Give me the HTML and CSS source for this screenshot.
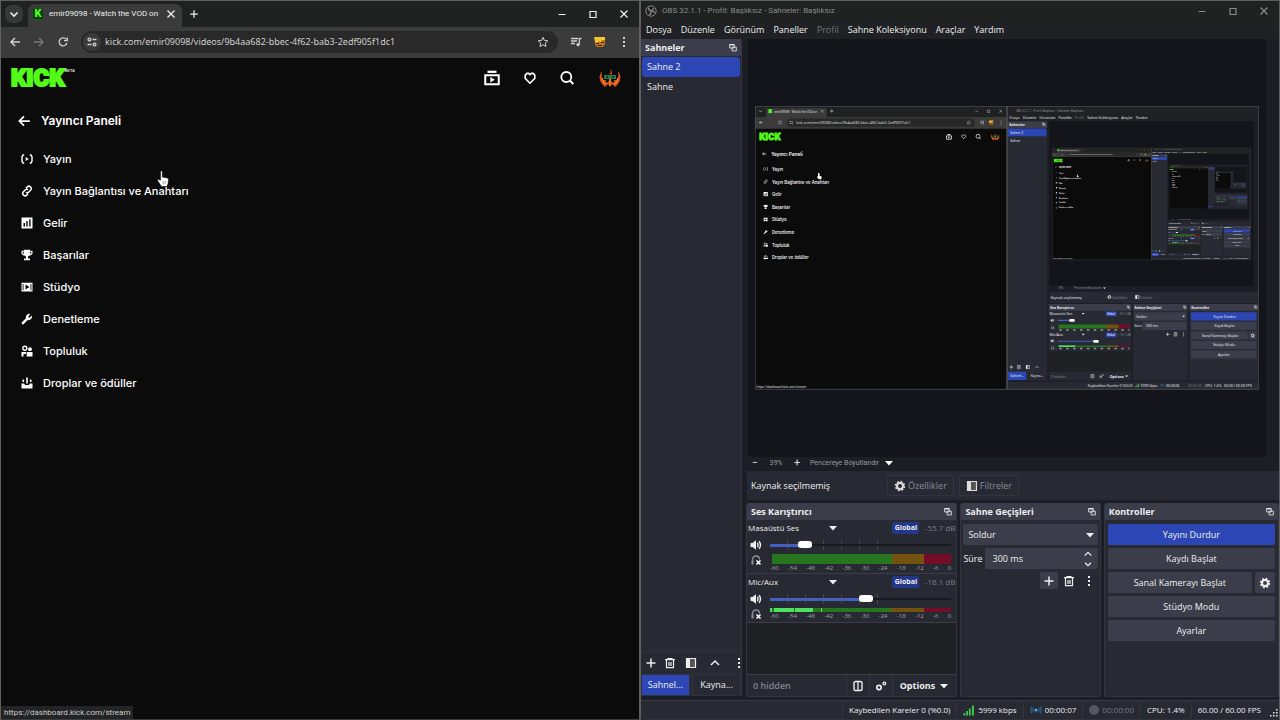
FILE: index.html
```html
<!DOCTYPE html>
<html lang="tr">
<head>
<meta charset="utf-8">
<meta name="viewport" content="width=device-width, initial-scale=1">
<title>Yayıncı Paneli</title>
<link rel="stylesheet" href="styles.css">
</head>
<body>
<svg class="sprite" aria-hidden="true">
  <symbol id="i-down" viewBox="0 0 12 12"><path d="M2.5 4.5 6 8l3.500-3.500" fill="none" stroke="currentColor" stroke-width="1.600"/></symbol>
  <symbol id="i-up" viewBox="0 0 12 12"><path d="M2 8l4-4 4 4" fill="none" stroke="currentColor" stroke-width="1.500"/></symbol>
  <symbol id="i-x" viewBox="0 0 12 12"><path d="M2.500 2.500l7 7m0-7l-7 7" fill="none" stroke="currentColor" stroke-width="1.300"/></symbol>
  <symbol id="i-min" viewBox="0 0 12 12"><path d="M2.500 6.500h7" stroke="currentColor"/></symbol>
  <symbol id="i-max" viewBox="0 0 12 12"><path d="M3 3.500h6v6H3z" fill="none" stroke="currentColor" stroke-width="1.200"/></symbol>
  <symbol id="i-plus" viewBox="0 0 12 12"><path d="M6 1.500v9M1.500 6h9" stroke="currentColor" stroke-width="1.500"/></symbol>
  <symbol id="i-back" viewBox="0 0 12 12"><path d="M11 6H2m4-4L2 6l4 4" fill="none" stroke="currentColor" stroke-width="1.500"/></symbol>
  <symbol id="i-fwd" viewBox="0 0 12 12"><path d="M1 6h9M6 2l4 4-4 4" fill="none" stroke="currentColor" stroke-width="1.400"/></symbol>
  <symbol id="i-reload" viewBox="0 0 12 12"><path d="M9.300 3.300A4 4 0 1 0 10 7M10.300 1.500v3.200H7" fill="none" stroke="currentColor" stroke-width="1.300"/></symbol>
  <symbol id="i-tune" viewBox="0 0 12 12"><g fill="none" stroke="currentColor" stroke-width="1.300"><circle cx="3.500" cy="3.500" r="1.400"/><path d="M6.500 3.500h4M1.500 8.500h4"/><circle cx="8.500" cy="8.500" r="1.400"/></g></symbol>
  <symbol id="i-star" viewBox="0 0 12 12"><path d="M6 1.300l1.400 3.100 3.400.4-2.500 2.300.7 3.400-3-1.700-3 1.700.7-3.400L1.200 4.800l3.400-.4z" fill="none" stroke="currentColor"/></symbol>
  <symbol id="i-music" viewBox="0 0 12 12"><path d="M1 2.500h7M1 5h6M1 7.500h4M9.300 2v6.500M9 2.500h2.500" fill="none" stroke="currentColor" stroke-width="1.300"/><circle cx="8" cy="8.700" r="1.600" fill="currentColor"/></symbol>
  <symbol id="i-dots" viewBox="0 0 12 12"><path d="M5 1h2v2H5zM5 5h2v2H5zM5 9h2v2H5z" fill="currentColor"/></symbol>
  <symbol id="i-vod" viewBox="0 0 16 16"><path d="M4 1.500h8v2H4z" fill="currentColor"/><path d="M2 5.500h12v8H2z" fill="none" stroke="currentColor" stroke-width="1.800"/><path d="M6.500 7v5l4-2.500z" fill="currentColor"/></symbol>
  <symbol id="i-heart" viewBox="0 0 16 16"><path d="M8 13.200L3.200 8.300V5.200L5 3.400h1.700L8 4.700l1.300-1.300H11l1.800 1.800v3.100z" fill="none" stroke="currentColor" stroke-width="1.600"/></symbol>
  <symbol id="i-search" viewBox="0 0 16 16"><circle cx="7.300" cy="7" r="5" fill="none" stroke="currentColor" stroke-width="1.800"/><path d="M11 10.700l3.300 3.300" stroke="currentColor" stroke-width="2"/></symbol>
  <symbol id="i-live" viewBox="0 0 12 12"><path d="M3.200 2H2L1 3.800v4.400L2 10h1.200M8.800 2H10l1 1.800v4.400L10 10H8.800" fill="none" stroke="currentColor" stroke-width="1.400"/><path d="M4.700 4v4l3-2z" fill="currentColor"/></symbol>
  <symbol id="i-link" viewBox="0 0 12 12"><path d="M5 3.200l1.400-1.400q1.600-1.300 3 0 1.700 1.600.4 3.200L7.600 7.200q-1.400 1.100-2.700 0M7 8.800l-1.400 1.400q-1.600 1.300-3 0-1.700-1.600-.4-3.200l2.200-2.200q1.400-1.100 2.700 0" fill="none" stroke="currentColor" stroke-width="1.500"/></symbol>
  <symbol id="i-chart" viewBox="0 0 12 12"><path d="M.5.500h11v11H.5zM2.500 6v3.500H4V6zM5.300 4v5.500h1.400V4zM8.200 2.300v7.200h1.400V2.300z" fill="currentColor" fill-rule="evenodd"/></symbol>
  <symbol id="i-cup" viewBox="0 0 12 12"><path d="M3 .7h6v1h2.500v3L9.500 6.500H8.400L7 7.700v1.800h2v1.800H3V9.500h2V7.700L3.600 6.500H2.500L.5 4.700v-3H3zM1.700 2.800v1.400l1.100.8V2.800zM9.200 2.800V5l1.100-.8V2.800z" fill="currentColor" fill-rule="evenodd"/></symbol>
  <symbol id="i-studio" viewBox="0 0 12 12"><path d="M.5 1.700h11v8.800H.5zM1.600 3v6.300h.9V3zM9.500 3v6.300h.9V3zM4.500 3.500v5l4-2.500z" fill="currentColor" fill-rule="evenodd"/></symbol>
  <symbol id="i-wrench" viewBox="0 0 12 12"><path d="M.7 9.500l4.200-4.200q-.5-2 1-3.500Q7.400.5 9.400 1L7.500 3v1.500H9L11 2.600q.5 2-.9 3.400-1.400 1.500-3.400 1L2.500 11.300q-1 .3-1.500-.3-.6-.7-.3-1.500z" fill="currentColor"/></symbol>
  <symbol id="i-people" viewBox="0 0 12 12"><circle cx="3.800" cy="3.200" r="2" fill="none" stroke="currentColor" stroke-width="1.400"/><circle cx="9" cy="4.200" r="1.900" fill="currentColor"/><path d="M.5 11.500V7h4.500v2H2.500v2.500zM5.700 7h5.800v4.500H5.700z" fill="currentColor"/></symbol>
  <symbol id="i-drops" viewBox="0 0 12 12"><path d="M5.200.5h1.600v6H5.200zM1.500 2.500h1.600V5H1.500zM8.900 2.500h1.600V5H8.900zM.5 6.500H3L4.300 8h3.400L9 6.500h2.500v5H.5z" fill="currentColor"/></symbol>
  <symbol id="i-pop" viewBox="0 0 12 12"><path d="M2 2h5.500v4H2zM5 5h5v4.500H5z" fill="#3b3e4a" stroke="currentColor"/><path d="M2 2h5.500" stroke="currentColor" stroke-width="1.500"/></symbol>
  <symbol id="i-trash" viewBox="0 0 12 12"><path d="M1 2.700h10M4 2.500v-1h4v1M2.500 3v7.700h7V3M5 5v4M7 5v4" fill="none" stroke="currentColor" stroke-width="1.200"/></symbol>
  <symbol id="i-filter" viewBox="0 0 12 12"><path d="M1.500 1.500h9v9h-9z" fill="#555" stroke="currentColor" stroke-width="1.200"/><path d="M1.500 1.500H5v9H1.500z" fill="currentColor"/></symbol>
  <symbol id="i-gear" viewBox="0 0 12 12"><circle cx="6" cy="6" r="3" fill="none" stroke="currentColor" stroke-width="2"/><circle cx="6" cy="6" r="4.400" fill="none" stroke="currentColor" stroke-width="1.600" stroke-dasharray="1.900 1.550"/></symbol>
  <symbol id="i-speaker" viewBox="0 0 12 12"><path d="M.5 4h2L6 1.300v9.400L2.500 8h-2z" fill="currentColor"/><path d="M7.300 3.800q1.500 2.200 0 4.400M9 2.200q3 3.800 0 7.600" fill="none" stroke="currentColor" stroke-width="1.400"/></symbol>
  <symbol id="i-phones" viewBox="0 0 12 12"><path d="M2.500 10V5.500q0-3.500 3.500-3.500t3.500 3.500" fill="none" stroke="#8b8d94" stroke-width="1.300"/><path d="M1.500 6.500h2v4h-2z" fill="#8b8d94"/><path d="M6.500 6.500l4 4m0-4l-4 4" stroke="#fff" stroke-width="1.600"/></symbol>
  <symbol id="i-cols" viewBox="0 0 12 12"><rect x="2" y="1.500" width="8" height="9" rx="1.500" fill="none" stroke="currentColor" stroke-width="1.400"/><path d="M6 1.500v9" stroke="currentColor" stroke-width="1.300"/></symbol>
  <symbol id="i-gears" viewBox="0 0 12 12"><circle cx="4" cy="7.500" r="2.200" fill="none" stroke="currentColor" stroke-width="1.700"/><circle cx="9.300" cy="3.500" r="1.400" fill="none" stroke="currentColor" stroke-width="1.300"/></symbol>
  <symbol id="i-tri" viewBox="0 0 12 12"><path d="M2 4h8L6 8.500z" fill="currentColor"/></symbol>
  <symbol id="i-obs" viewBox="0 0 12 12"><circle cx="6" cy="6" r="5.200" fill="none" stroke="currentColor" stroke-width=".9"/><path d="M3.500 2.500q-.3 3 2.500 3.300 2.500-1 2.800-2.800M6 5.800q.8 3-2 4M6 5.800q2.700-.2 4 2.200" fill="none" stroke="currentColor" stroke-width="1.200"/></symbol>
  <symbol id="i-bars" viewBox="0 0 12 12"><path d="M.5 9h1.800v2.500H.5zM3.200 7H5v4.500H3.200zM5.900 4.500h1.800v7H5.900zM8.900 1.500h2v10h-2z" fill="#3fc64b"/></symbol>
  <symbol id="i-air" viewBox="0 0 12 12"><circle cx="6" cy="6" r="1.600" fill="#4aa3e8"/><path d="M3.500 3.500q-1.500 2.500 0 5M8.500 3.500q1.500 2.500 0 5M1.700 2.500q-1.800 3.500 0 7M10.300 2.500q1.800 3.500 0 7" fill="none" stroke="#2c6ca8"/></symbol>
  <symbol id="i-grip" viewBox="0 0 12 12"><path d="M9 2h1.500v1.500H9zM9 5h1.500v1.500H9zM9 8h1.500v1.500H9zM6 5h1.500v1.500H6zM6 8h1.500v1.500H6zM3 8h1.500v1.500H3z" fill="currentColor"/></symbol>
  <symbol id="i-phoenix" viewBox="0 0 24 24"><path d="M4 5Q-1 11 4 18l3 3 3-3 2 3 2-3 3 3 3-3q5-7 0-13 1 6-1 9h-3v3l-3-2v-4h-2v4l-3 2v-3H5Q3 11 4 5z" fill="#d2501a"/><path d="M4 12l2 5 3 1M20 12l-2 5-3 1M12 20v-7" fill="none" stroke="#f2882a" stroke-width="1.200"/><path d="M11 8l2-2-1-3 2 2v4z" fill="#c2361a"/><path d="M6 9h12v4H6z" fill="#287a4c"/><path d="M8 10h2v2H8zM14 10h2v2h-2z" fill="#163d2a"/></symbol>
  <symbol id="i-face" viewBox="0 0 12 12"><path d="M1 1h10v7l-2 3H3L1 8z" fill="#c8761a"/><path d="M0 1h11v3H8L7 6 5 5 3 7 1 6z" fill="#f2c62c"/><path d="M2 7h3v1H2zM7 6h3v1H7zM4 9h4v1H4z" fill="#421b10"/></symbol>
</svg>

<main class="desktop">
  <section class="browser" aria-label="Tarayıcı">
    <header class="tabs">
      <button class="tab-list" aria-label="Sekme ara"><svg class="s12"><use href="#i-down"/></svg></button>
      <div class="tab"><span class="favicon">K</span><span class="tab-title">emir09098 - Watch the VOD on</span><button aria-label="Sekmeyi kapat"><svg class="s12"><use href="#i-x"/></svg></button></div>
      <button class="new-tab" aria-label="Yeni sekme"><svg class="s10"><use href="#i-plus"/></svg></button>
      <div class="window-buttons">
        <button aria-label="Küçült"><svg class="s12"><use href="#i-min"/></svg></button><button aria-label="Büyüt"><svg class="s12"><use href="#i-max"/></svg></button><button aria-label="Kapat"><svg class="s12"><use href="#i-x"/></svg></button>
      </div>
    </header>
    <nav class="address-bar" aria-label="Adres çubuğu">
      <button aria-label="Geri"><svg class="s12"><use href="#i-back"/></svg></button>
      <button class="faded" aria-label="İleri"><svg class="s12"><use href="#i-fwd"/></svg></button>
      <button aria-label="Yenile"><svg class="s12"><use href="#i-reload"/></svg></button>
      <div class="omnibox"><button class="site-info" aria-label="Site bilgisi"><svg class="s12"><use href="#i-tune"/></svg></button><input aria-label="Adres" value="kick.com/emir09098/videos/9b4aa682-bbec-4f62-bab3-2edf905f1dc1"><button aria-label="Yer işareti"><svg class="s12"><use href="#i-star"/></svg></button></div>
      <button aria-label="Medya"><svg class="s12"><use href="#i-music"/></svg></button>
      <button aria-label="Profil"><svg class="s12"><use href="#i-face"/></svg></button>
      <button aria-label="Menü"><svg class="s12"><use href="#i-dots"/></svg></button>
    </nav>
    <div class="kick">
      <header class="kick-top">
        <a class="logo" href="#"><span class="logo-word">KICK</span><sup>BETA</sup></a>
        <div class="kick-actions">
          <button aria-label="Videolar"><svg class="s18"><use href="#i-vod"/></svg></button><button aria-label="Takip"><svg class="s16"><use href="#i-heart"/></svg></button><button aria-label="Ara"><svg class="s16"><use href="#i-search"/></svg></button><button class="account" aria-label="Hesap"><svg class="s24"><use href="#i-phoenix"/></svg></button>
        </div>
      </header>
      <a class="kick-heading" href="#"><svg class="s14"><use href="#i-back"/></svg><h1>Yayıncı Paneli</h1></a>
      <nav class="kick-menu" aria-label="Yayıncı Paneli">
        <a href="#"><svg class="s12"><use href="#i-live"/></svg>Yayın</a>
        <a href="#"><svg class="s12"><use href="#i-link"/></svg>Yayın Bağlantısı ve Anahtarı</a>
        <a href="#"><svg class="s12"><use href="#i-chart"/></svg>Gelir</a>
        <a href="#"><svg class="s12"><use href="#i-cup"/></svg>Başarılar</a>
        <a href="#"><svg class="s12"><use href="#i-studio"/></svg>Stüdyo</a>
        <a href="#"><svg class="s12"><use href="#i-wrench"/></svg>Denetleme</a>
        <a href="#"><svg class="s12"><use href="#i-people"/></svg>Topluluk</a>
        <a href="#"><svg class="s12"><use href="#i-drops"/></svg>Droplar ve ödüller</a>
      </nav>
    </div>
    <span class="link-status">https://dashboard.kick.com/stream</span>
    <svg class="pointer" viewBox="0 0 12 17" aria-hidden="true"><path d="M3.500 1q1.500-.7 1.800.8V7l5 1q1.200.3 1.200 1.600l-.4 4-1.200 3H4.500L1 11.200Q0 9.500 1.300 9.300l2.200 1z" fill="#fff" stroke="#000" stroke-width=".5"/><path d="M6.200 11v3M8.200 11v3" stroke="#555" stroke-width=".5"/></svg>
  </section>

  <section class="obs" aria-label="OBS">
    <header class="obs-title"><svg class="s12"><use href="#i-obs"/></svg><span>OBS 32.1.1 - Profil: Başlıksız - Sahneler: Başlıksız</span>
      <div class="window-buttons"><button aria-label="Küçült"><svg class="s12"><use href="#i-min"/></svg></button><button aria-label="Büyüt"><svg class="s12"><use href="#i-max"/></svg></button><button aria-label="Kapat"><svg class="s12"><use href="#i-x"/></svg></button></div>
    </header>
    <nav class="obs-menu" aria-label="Menü"><button>Dosya</button><button>Düzenle</button><button>Görünüm</button><button>Paneller</button><button disabled>Profil</button><button>Sahne Koleksiyonu</button><button>Araçlar</button><button>Yardım</button></nav>
    <div class="obs-body">
      <aside class="scenes">
        <h2 class="dock-title">Sahneler<svg class="s10"><use href="#i-pop"/></svg></h2>
        <div class="scene-list"><button class="scene active">Sahne 2</button><button class="scene">Sahne</button></div>
        <div class="scene-tools"><button aria-label="Ekle"><svg class="s12"><use href="#i-plus"/></svg></button><button aria-label="Sil"><svg class="s12"><use href="#i-trash"/></svg></button><button aria-label="Filtreler"><svg class="s12"><use href="#i-filter"/></svg></button><button aria-label="Yukarı"><svg class="s12"><use href="#i-up"/></svg></button><button aria-label="Diğer"><svg class="s12"><use href="#i-dots"/></svg></button></div>
        <div class="scene-tabs"><button class="active">Sahnel...</button><button>Kayna...</button></div>
      </aside>
      <div class="work">
        <div class="preview">
          <svg class="capture" viewBox="0 0 1280 720" role="img" aria-label="Ekran yakalama önizlemesi">
            <g id="screen">
              <path d="M0 0h1280v720H0z" fill="#0b0b0c"/>
              <path d="M0 0h640v28H0z" fill="#202121"/><path d="M28 6h154v22H28z" fill="#3b3b3b"/><path d="M0 28h640v30H0z" fill="#3b3b3b"/><rect x="82" y="32" width="476" height="21" rx="10" fill="#282828"/>
              <g fill="#ddd" color="#ccc" class="cap-browser">
                <text class="cap-title" x="49" y="17">emir09098 - Watch the VOD on</text><text x="105" y="46">kick.com/emir09098/videos/9b4aa682-bbec-4f62-bab3-2edf905f1dc1</text>
                <use href="#i-down" x="8" y="7" width="12" height="12"/><use href="#i-x" x="165" y="7" width="12" height="12"/><use href="#i-plus" x="189" y="7" width="12" height="12"/><use href="#i-back" x="9" y="36" width="12" height="12"/><use href="#i-reload" x="57" y="36" width="12" height="12"/><use href="#i-tune" x="86" y="36" width="12" height="12"/><use href="#i-star" x="537" y="36" width="12" height="12"/><use href="#i-music" x="571" y="36" width="12" height="12"/><use href="#i-face" x="594" y="36" width="12" height="12"/><use href="#i-dots" x="619" y="36" width="12" height="12"/><use href="#i-min" x="557" y="7" width="12" height="12"/><use href="#i-max" x="587" y="7" width="12" height="12"/><use href="#i-x" x="618" y="7" width="12" height="12"/>
                <text class="cap-title" x="4" y="716">https://dashboard.kick.com/stream</text>
              </g>
              <path d="M34 8h9v10h-9z" fill="#52f225"/>
              <text class="cap-logo" x="11" y="87">KICK</text>
              <g fill="#fff" color="#fff" class="cap-kick">
                <text class="cap-heading" x="41" y="126">Yayıncı Paneli</text><text x="43" y="165">Yayın</text><text x="43" y="197">Yayın Bağlantısı ve Anahtarı</text><text x="43" y="229">Gelir</text><text x="43" y="261">Başarılar</text><text x="43" y="293">Stüdyo</text><text x="43" y="325">Denetleme</text><text x="43" y="357">Topluluk</text><text x="43" y="389">Droplar ve ödüller</text>
                <use href="#i-back" x="17" y="115" width="13" height="13"/><use href="#i-live" x="21" y="154" width="12" height="12"/><use href="#i-link" x="21" y="186" width="12" height="12"/><use href="#i-chart" x="21" y="218" width="12" height="12"/><use href="#i-cup" x="21" y="250" width="12" height="12"/><use href="#i-studio" x="21" y="282" width="12" height="12"/><use href="#i-wrench" x="21" y="314" width="12" height="12"/><use href="#i-people" x="21" y="346" width="12" height="12"/><use href="#i-drops" x="21" y="378" width="12" height="12"/>
                <use href="#i-vod" x="484" y="70" width="17" height="17"/><use href="#i-heart" x="522" y="70" width="16" height="16"/><use href="#i-search" x="559" y="70" width="16" height="16"/><use href="#i-phoenix" x="598" y="66" width="24" height="24"/>
                <path d="M160 170l4 1v6l5 2v7h-7l-5-6 3-2z"/>
              </g>
              <path d="M640 0h640v39H640z" fill="#202124"/><path d="M640 39h640v681H640z" fill="#1c1e26"/><path d="M748 39h518v418H748z" fill="#14151a"/><path d="M641 56h101v641H641zM748 472h530v28H748zM746 503h210v194H746zM960 503h139v194H960zM1103 503h175v194h-175zM641 701h637v18H641z" fill="#272a33"/>
              <path d="M641 39h101v17H641zM746 503h210v17H746zM960 503h139v17H960zM1103 503h175v17h-175zM963 524h133v21H963zM984 548h112v21H984zM1107 548h167v21h-167zM1107 572h144v21h-144zM1254 572h20v21h-20zM1107 596h167v21h-167zM1107 620h167v21h-167z" fill="#3b3e4a"/>
              <path d="M642 57h98v20h-98zM641 675h48v21h-48zM1107 524h167v21h-167zM891 522h27v12h-27zM891 575h27v12h-27z" fill="#2c47b5"/><path d="M746 623h210v52H746z" fill="#202125"/>
              <path d="M771 555h121v10H771zM771 608h121v4H771z" fill="#25761f"/><path d="M892 555h32v10h-32zM892 608h32v4h-32z" fill="#74520f"/><path d="M924 555h27v10h-27zM924 608h27v4h-27z" fill="#730d27"/><path d="M771 608h42v4h-42z" fill="#4ee060"/><path d="M769 543h36v3h-36zM769 596h97v3h-97z" fill="#455fc0"/><rect x="798" y="541" width="14" height="7" rx="3" fill="#fff"/><rect x="859" y="594" width="14" height="7" rx="3" fill="#fff"/>
              <path d="M773 569h178M773 616h178" stroke="#999" stroke-width="4" stroke-dasharray="6 11.500"/>
              <g class="cap-obs" fill="#eee" color="#eee">
                <text class="cap-title" x="662" y="14" fill="#888">OBS 32.1.1 - Profil: Başlıksız - Sahneler: Başlıksız</text><text x="646" y="33">Dosya</text><text x="680" y="33">Düzenle</text><text x="722" y="33">Görünüm</text><text x="771" y="33">Paneller</text><text x="813" y="33" fill="#777">Profil</text><text x="844" y="33">Sahne Koleksiyonu</text><text x="930" y="33">Araçlar</text><text x="967" y="33">Yardım</text>
                <text x="646" y="51" font-weight="700">Sahneler</text><text x="648" y="71">Sahne 2</text><text x="648" y="91">Sahne</text><text x="648" y="689">Sahnel...</text><text x="700" y="689">Kayna...</text><text class="cap-small" x="770" y="465" fill="#888">39%</text><text class="cap-small" x="810" y="465" fill="#888">Pencereye Boyutlandır</text><text x="751" y="489">Kaynak seçilmemiş</text><text x="907" y="489" fill="#888">Özellikler</text><text x="978" y="489" fill="#888">Filtreler</text>
                <text x="750" y="515" font-weight="700">Ses Karıştırıcı</text><text x="748" y="531">Masaüstü Ses</text><text x="748" y="585">Mic/Aux</text><text class="cap-small" x="894" y="531">Global</text><text class="cap-small" x="894" y="584">Global</text><text class="cap-title" x="925" y="531" fill="#888">-55.7 dB</text><text class="cap-title" x="925" y="584" fill="#888">-16.1 dB</text><text x="964" y="515" font-weight="700">Sahne Geçişleri</text><text x="968" y="538">Soldur</text><text x="963" y="562">Süre</text><text x="993" y="562">300 ms</text><text x="1108" y="515" font-weight="700">Kontroller</text><text x="1164" y="538">Yayını Durdur</text><text x="1167" y="562">Kaydı Başlat</text><text x="1135" y="586">Sanal Kamerayı Başlat</text><text x="1163" y="610">Stüdyo Modu</text><text x="1176" y="634">Ayarlar</text>
                <text x="752" y="690" fill="#888">0 hidden</text><text x="901" y="690" font-weight="700">Options</text><text x="845" y="713">Kaybedilen Kareler 0 (%0.0)</text><text x="979" y="713">5999 kbps</text><text x="1043" y="713">00:00:06</text><text x="1099" y="713" fill="#777">00:00:00</text><text x="1142" y="713">CPU: 1.4%</text><text x="1191" y="713">60.00 / 60.00 FPS</text>
                <use href="#i-plus" x="645" y="657" width="12" height="12"/><use href="#i-trash" x="664" y="657" width="12" height="12"/><use href="#i-filter" x="687" y="657" width="12" height="12"/><use href="#i-up" x="710" y="657" width="12" height="12"/><use href="#i-speaker" x="750" y="539" width="11" height="11"/><use href="#i-speaker" x="750" y="591" width="11" height="11"/><use href="#i-phones" x="750" y="556" width="11" height="11"/><use href="#i-phones" x="750" y="608" width="11" height="11"/><use href="#i-tri" x="828" y="522" width="11" height="11"/><use href="#i-tri" x="828" y="575" width="11" height="11"/><use href="#i-tri" x="882" y="457" width="11" height="11"/><use href="#i-tri" x="938" y="681" width="11" height="11"/><use href="#i-tri" x="1083" y="529" width="11" height="11"/><use href="#i-plus" x="1042" y="574" width="12" height="12"/><use href="#i-trash" x="1062" y="574" width="12" height="12"/><use href="#i-dots" x="1082" y="574" width="12" height="12"/><use href="#i-gear" x="1258" y="577" width="12" height="12"/><use href="#i-gear" x="894" y="479" width="12" height="12"/><use href="#i-filter" x="965" y="479" width="12" height="12"/><use href="#i-cols" x="851" y="680" width="12" height="12"/><use href="#i-gears" x="874" y="680" width="12" height="12"/><use href="#i-bars" x="964" y="703" width="12" height="12"/><use href="#i-air" x="1028" y="703" width="12" height="12"/><use href="#i-pop" x="728" y="42" width="11" height="11"/><use href="#i-pop" x="943" y="506" width="11" height="11"/><use href="#i-pop" x="1086" y="506" width="11" height="11"/><use href="#i-pop" x="1266" y="506" width="11" height="11"/>
              </g>
              <path d="M.5.500h639v719H.5zM640.500.500h639v719h-639z" fill="none" stroke="#555759" stroke-width="2"/>
            </g>
            <g transform="translate(755 107) scale(.3937)"><use href="#screen"/><g transform="translate(755 107) scale(.3937)"><use href="#screen"/><g transform="translate(755 107) scale(.3937)"><use href="#screen"/></g></g></g>
          </svg>
        </div>
        <div class="zoom-bar"><button aria-label="Uzaklaştır">−</button><output>39%</output><button aria-label="Yakınlaştır">+</button><select aria-label="Ölçek"><option>Pencereye Boyutlandır</option></select><svg class="s12"><use href="#i-tri"/></svg></div>
        <div class="source-bar"><span>Kaynak seçilmemiş</span><button><svg class="s12"><use href="#i-gear"/></svg>Özellikler</button><button><svg class="s12"><use href="#i-filter"/></svg>Filtreler</button></div>
        <div class="docks">
          <section class="dock mixer">
            <h2 class="dock-title">Ses Karıştırıcı<svg class="s10"><use href="#i-pop"/></svg></h2>
            <article class="track desktop-audio">
              <div class="track-head"><label for="v1">Masaüstü Ses</label><svg class="s12"><use href="#i-tri"/></svg><b>Global</b><output>-55.7 dB</output></div>
              <div class="volume"><svg class="s12"><use href="#i-speaker"/></svg><input class="low" id="v1" type="range" min="0" max="100" value="17"></div>
              <div class="levels"><svg class="s12"><use href="#i-phones"/></svg><div class="meter-box"><div class="meter"></div><div class="scale"><span>-60</span><span>-54</span><span>-48</span><span>-42</span><span>-36</span><span>-30</span><span>-24</span><span>-18</span><span>-12</span><span>-6</span><span>0</span></div></div></div>
            </article>
            <article class="track">
              <div class="track-head"><label for="v2">Mic/Aux</label><svg class="s12"><use href="#i-tri"/></svg><b>Global</b><output>-16.1 dB</output></div>
              <div class="volume"><svg class="s12"><use href="#i-speaker"/></svg><input class="mid" id="v2" type="range" min="0" max="100" value="53"></div>
              <div class="levels"><svg class="s12"><use href="#i-phones"/></svg><div class="meter-box"><div class="meter live"></div><div class="scale"><span>-60</span><span>-54</span><span>-48</span><span>-42</span><span>-36</span><span>-30</span><span>-24</span><span>-18</span><span>-12</span><span>-6</span><span>0</span></div></div></div>
            </article>
            <div class="mixer-space"></div>
            <footer class="mixer-foot"><span>0 hidden</span><button aria-label="Düzen"><svg class="s12"><use href="#i-cols"/></svg></button><button aria-label="Gelişmiş"><svg class="s12"><use href="#i-gears"/></svg></button><button class="options">Options<svg class="s12"><use href="#i-tri"/></svg></button></footer>
          </section>
          <section class="dock">
            <h2 class="dock-title">Sahne Geçişleri<svg class="s10"><use href="#i-pop"/></svg></h2>
            <div class="transition-body">
              <div class="field"><select aria-label="Geçiş"><option>Soldur</option></select><svg class="s12"><use href="#i-tri"/></svg></div>
              <div class="duration"><label for="duration">Süre</label><div class="field"><input id="duration" value="300 ms"><span class="spin"><button aria-label="Artır"><svg class="s10"><use href="#i-up"/></svg></button><button aria-label="Azalt"><svg class="s10"><use href="#i-down"/></svg></button></span></div></div>
              <div class="transition-tools"><button class="filled" aria-label="Ekle"><svg class="s12"><use href="#i-plus"/></svg></button><button aria-label="Sil"><svg class="s12"><use href="#i-trash"/></svg></button><button aria-label="Diğer"><svg class="s12"><use href="#i-dots"/></svg></button></div>
            </div>
          </section>
          <section class="dock">
            <h2 class="dock-title">Kontroller<svg class="s10"><use href="#i-pop"/></svg></h2>
            <div class="controls"><button class="active">Yayını Durdur</button><button>Kaydı Başlat</button><div class="camera"><button>Sanal Kamerayı Başlat</button><button aria-label="Kamera ayarları"><svg class="s12"><use href="#i-gear"/></svg></button></div><button>Stüdyo Modu</button><button>Ayarlar</button></div>
          </section>
        </div>
      </div>
    </div>
    <footer class="status-bar"><span>Kaybedilen Kareler 0 (%0.0)</span><span><svg class="s12"><use href="#i-bars"/></svg>5999 kbps</span><span><svg class="s12"><use href="#i-air"/></svg>00:00:07</span><span class="muted"><i></i>00:00:00</span><span>CPU: 1.4%</span><span>60.00 / 60.00 FPS</span><svg class="grip s12" aria-hidden="true"><use href="#i-grip"/></svg></footer>
  </section>
</main>
</body>
</html>
```
FILE: styles.css
```css
* { box-sizing: border-box; }
body { margin: 0; background: #0b0b0c; color: #eee; font: 9px/14px "Open Sans", "Noto Sans", sans-serif; }
button, input, select { font: inherit; color: inherit; border: 0; padding: 0; margin: 0; background: none; min-width: 0; }
button { display: flex; align-items: center; justify-content: center; white-space: nowrap; }
a { color: inherit; text-decoration: none; }
h1, h2 { margin: 0; font-size: inherit; }
svg { display: block; flex: none; }
.sprite { position: absolute; width: 0; height: 0; }
.s10 { width: 10px; height: 10px; }
.s12 { width: 12px; height: 12px; }
.s14 { width: 14px; height: 14px; }
.s16 { width: 16px; height: 16px; }
.s18 { width: 18px; height: 18px; }
.s24 { width: 24px; height: 24px; }
.desktop { display: grid; grid-template-columns: 1fr 1fr; min-height: 100vh; }

/* Browser window */
.browser { position: relative; display: flex; flex-direction: column; border: 1px solid #5d605f; border-bottom-color: #393b3c; background: #0b0b0c; min-width: 0; }
.tabs { display: flex; height: 26px; background: #202222; align-items: center; padding-left: 4px; }
.tab-list { width: 18px; height: 18px; border-radius: 7px; background: #373838; }
.tab { display: flex; align-items: center; align-self: stretch; margin: 3px 0 0 5px; width: 154px; padding: 0 5px 3px; border-radius: 7px 7px 0 0; background: #3b3b3b; gap: 6px; font: 8px/14px Roboto, sans-serif; }
.favicon { width: 10px; height: 10px; background: #06410b; color: #53fc18; font: 900 11px/10px Roboto, sans-serif; text-align: center; }
.tab-title { flex: 1; white-space: nowrap; }
.new-tab { width: 18px; height: 20px; margin-left: 3px; }
.window-buttons { display: flex; margin-left: auto; gap: 6px; padding-right: 3px; }
.window-buttons button { width: 25px; height: 20px; }
.address-bar { display: flex; height: 31px; align-items: center; background: #3b3b3b; padding: 0 3px 1px 2px; color: #d0d0d0; }
.address-bar > button { width: 24px; height: 24px; }
.faded { color: #777; }
.omnibox { display: flex; align-items: center; flex: 1; margin: 0 6px; height: 22px; border-radius: 11px; background: #292929; padding: 0 9px 0 2px; }
.omnibox input { flex: 1; font: 9px/14px "Noto Sans", sans-serif; }
.site-info { width: 18px; height: 18px; border-radius: 9px; background: #3b3b3b; margin-right: 4px; }
.kick { flex: 1; font-family: Inter, sans-serif; color: #fff; }
.kick-top { display: flex; align-items: center; justify-content: space-between; height: 40px; padding: 0 17px 0 10px; }
.logo { display: flex; align-items: flex-start; color: #53fc18; }
.logo-word { font: 900 24px/20px Roboto, sans-serif; -webkit-text-stroke: 2px #53fc18; }
.logo sup { color: #ddd; font: 700 4px/6px Inter, sans-serif; }
.kick-actions { display: flex; gap: 21px; align-items: center; }
.account { margin-left: 2px; }
.kick-heading { display: flex; align-items: center; gap: 10px; padding: 14px 16px 12px; }
.kick-heading h1 { font-size: 12px; font-weight: 600; line-height: 18px; }
.kick-menu { padding-top: 1px; }
.kick-menu a { display: flex; align-items: center; gap: 10px; height: 32px; padding-left: 20px; font-size: 11px; font-weight: 500; line-height: 16px; }
.link-status { position: absolute; left: 0; bottom: 0; padding: 0 3px; background: #222425; color: #ccc; font: 8px/13px Roboto, sans-serif; }
.pointer { position: absolute; left: 156px; top: 169px; width: 12px; height: 17px; }

/* OBS window */
.obs { display: flex; flex-direction: column; background: #1c1e26; border: 1px solid #5d605f; border-bottom-color: #303238; min-width: 0; }
.obs-title { display: flex; align-items: center; height: 19px; gap: 5px; padding-left: 4px; background: #202121; color: #8a8a8a; font: 8px/14px Roboto, sans-serif; }
.obs-menu { display: flex; align-items: center; gap: 9px; height: 19px; padding-left: 5px; background: #202124; }
.obs-menu button:disabled { color: #737373; }
.obs-body { display: grid; grid-template-columns: 101px minmax(0, 1fr); gap: 4px; flex: 1; }
.scenes { display: flex; flex-direction: column; background: #272a33; border-right: 1px solid #333641; margin-bottom: 4px; min-width: 0; }
.dock-title { display: flex; align-items: center; justify-content: space-between; height: 17px; padding: 0 3px 0 4px; background: #3b3e4a; font-weight: 700; white-space: nowrap; }
.scene-list { flex: 1; padding: 1px; }
.scene { width: 100%; height: 20px; justify-content: flex-start; padding-left: 5px; border-radius: 3px; }
.active { background: #2c47b5; }
.scene-tools { display: flex; height: 23px; border-top: 1px solid #30333d; overflow: hidden; }
.scene-tools button { width: 24px; flex: none; }
.scene-tools button:nth-child(-n+2) { width: 19px; }
.scene-tabs { display: grid; grid-template-columns: 1fr 1fr; gap: 2px; height: 22px; }
.scene-tabs button { border: 1px solid #30333d; }
.work { display: flex; flex-direction: column; min-width: 0; }
.preview { flex: 1; display: flex; align-items: center; justify-content: center; background: #14151a; margin: 0 13px 0 2px; }
.capture { width: calc(100% - 14px); height: auto; overflow: hidden; }
.cap-browser { font: 9px "Noto Sans", sans-serif; }
.cap-title { font: 8px Roboto, sans-serif; }
.cap-small { font: 7px Roboto, sans-serif; }
.cap-kick { font: 500 11px Inter, sans-serif; }
.cap-heading { font: 600 12px Inter, sans-serif; }
.cap-logo { font: 900 24px Roboto, sans-serif; fill: #53fc18; stroke: #53fc18; stroke-width: 2px; }
.cap-obs { font: 9px "Open Sans", sans-serif; }
.zoom-bar { display: flex; align-items: center; height: 12px; margin: 0 0 2px 2px; color: #999; font: 7px/12px Roboto, sans-serif; }
.zoom-bar button { width: 14px; color: #ddd; font-size: 11px; line-height: 12px; }
.zoom-bar output { width: 28px; text-align: center; }
.zoom-bar select { appearance: none; margin-left: 6px; }
.zoom-bar svg { color: #fff; margin-left: 3px; }
.source-bar { display: flex; align-items: center; height: 29px; gap: 5px; padding-left: 4px; margin-left: 1px; background: #272a33; }
.source-bar > span { width: 131px; }
.source-bar button { gap: 2px; height: 21px; padding: 0 6px; border: 1px solid #32353f; border-radius: 2px; color: #888b94; }
.source-bar svg { color: #ddd; }
.docks { display: grid; grid-template-columns: 211fr 140fr 175fr; gap: 3px; min-height: 194px; margin: 3px 0; }
.dock { display: flex; flex-direction: column; min-width: 0; border: 1px solid #333641; border-top: 0; border-radius: 3px; overflow: hidden; background: #272a33; }
.track { border-bottom: 1px solid #3b3e49; height: 49px; padding: 0 1px; overflow: hidden; }
.desktop-audio { height: 54px; }
.track-head { display: grid; grid-template-columns: 79px 1fr 27px 36px; align-items: center; font-size: 8px; line-height: 14px; height: 15px; }
.track-head b { background: #24378a; border-radius: 2px; text-align: center; font-size: 7px; line-height: 12px; }
.track-head output { color: #7c7e86; text-align: right; white-space: nowrap; }
.volume { display: flex; align-items: center; gap: 8px; height: 19px; padding: 0 4px 0 2px; }
.volume input { flex: 1; appearance: none; height: 10px; }
.volume .low { background: linear-gradient(#455fc0, #455fc0) 0 4px/20% 3px no-repeat, linear-gradient(#17191e, #17191e) 0 4px/100% 2px no-repeat, repeating-linear-gradient(90deg, transparent 0 17px, #444751 17px 18px) 0 0/118px 10px no-repeat; }
.volume .mid { background: linear-gradient(#455fc0, #455fc0) 0 4px/53% 3px no-repeat, linear-gradient(#17191e, #17191e) 0 4px/100% 2px no-repeat, repeating-linear-gradient(90deg, transparent 0 17px, #444751 17px 18px) 0 0/118px 10px no-repeat; }
.volume input::-webkit-slider-thumb { appearance: none; width: 14px; height: 7px; border-radius: 3px; background: #fff; }
.levels { display: flex; gap: 8px; padding: 0 4px 0 2px; align-items: flex-start; }
.meter-box { flex: 1; }
.meter { height: 10px; margin-left: 2px; background: linear-gradient(90deg, #25761f 67%, #74520f 67% 85%, #730d27 85%); }
.meter.live { height: 4px; margin-left: 0; background: linear-gradient(90deg, #4ee060 0 1%, #25761f 1% 2%, #4ee060 2% 13%, #25761f 13% 14%, #4ee060 14% 24%, #25761f 24% 28%, #4ee060 28% 29%, #25761f 29% 67%, #74520f 67% 85%, #730d27 85%); }
.scale { display: flex; justify-content: space-between; color: #a0a1a6; font-size: 6px; line-height: 8px; }
.mixer-space { flex: 1; background: #202125; }
.mixer-foot { display: flex; height: 22px; align-items: center; border-top: 1px solid #3b3e49; font-weight: 600; }
.mixer-foot span { flex: 1; padding-left: 6px; color: #80828a; }
.mixer-foot button { width: 23px; height: 21px; border-left: 1px solid #343742; }
.mixer-foot .options { width: 64px; gap: 3px; font-weight: 700; }
.transition-body { display: grid; gap: 3px; padding: 4px 2px; }
.field { display: flex; align-items: center; flex: 1; min-width: 0; height: 21px; border-radius: 2px; background: #3b3e4a; padding: 0 2px 0 5px; }
.field select, .field input { appearance: none; flex: 1; width: 0; }
.duration { display: flex; align-items: center; gap: 2px; }
.duration .field { padding-left: 8px; }
.spin { width: 13px; }
.transition-tools { display: flex; justify-content: flex-end; gap: 2px; }
.transition-tools button { width: 18px; height: 17px; }
.filled { background: #3b3e4a; border-radius: 2px; }
.controls { display: grid; gap: 3px; padding: 4px 3px; }
.controls button { height: 21px; border-radius: 2px; background: #3b3e4a; width: 100%; }
.controls .active { background: #2c47b5; }
.camera { display: grid; grid-template-columns: 1fr 20px; gap: 3px; }
.status-bar { display: flex; justify-content: flex-end; height: 19px; border-top: 1px solid #383b46; background: #272a33; font-size: 8px; }
.status-bar span { display: flex; align-items: center; gap: 3px; padding: 0 6px; border-left: 1px solid #32353f; white-space: nowrap; }
.status-bar .muted { color: #777981; }
.status-bar i { width: 10px; height: 10px; border-radius: 5px; background: #555861; }
.grip { align-self: flex-end; }
```
